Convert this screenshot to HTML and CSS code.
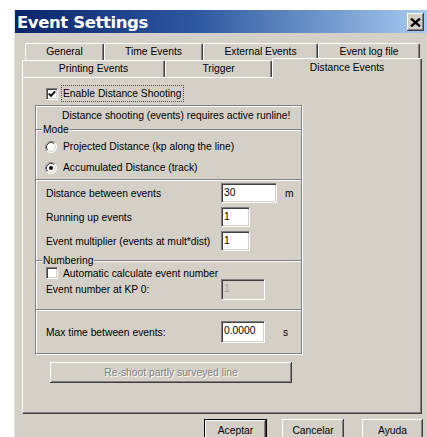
FILE: index.html
```html
<!DOCTYPE html>
<html>
<head>
<meta charset="utf-8">
<title>Event Settings</title>
<link rel="stylesheet" href="styles.css">
</head>
<body>
<div class="window">
  <div class="titlebar">
    <span class="title">Event Settings</span>
    <span class="close-btn">
      <svg width="11" height="9" viewBox="0 0 11 9"><path d="M1 0.6 L10 8.4 M10 0.6 L1 8.4" stroke="#000" stroke-width="2.3" fill="none"/></svg>
    </span>
  </div>

  <div class="client">
    <div class="tabs">
      <div class="tab-row row-back">
        <div class="tab w-general">General</div>
        <div class="tab w-time">Time Events</div>
        <div class="tab w-external">External Events</div>
        <div class="tab w-log">Event log file</div>
      </div>
      <div class="tab-row row-front">
        <div class="tab w-printing">Printing Events</div>
        <div class="tab w-trigger">Trigger</div>
        <div class="tab w-distance active">Distance Events</div>
      </div>
    </div>

    <div class="panel">
      <div class="top-check">
        <span class="checkbox">
          <svg width="8" height="8" viewBox="0 0 8 8"><path d="M0.8 3.6 L3 5.8 L7.2 1.4" stroke="#000" stroke-width="1.9" fill="none"/></svg>
        </span>
        <span class="focus-label">Enable Distance Shooting</span>
      </div>

      <div class="groupbox">
        <div class="sect sect-note">Distance shooting (events) requires active runline!</div>

        <div class="sect sect-mode">
          <div class="legend">Mode</div>
          <div class="radio-row">
            <svg class="radio" width="12" height="12" viewBox="0 0 12 12">
              <circle cx="6" cy="6" r="5.5" fill="#fff"/>
              <path d="M9.89 2.11 A5.5 5.5 0 0 0 2.11 9.89" stroke="#808080" fill="none"/>
              <path d="M9.18 2.82 A4.5 4.5 0 0 0 2.82 9.18" stroke="#404040" fill="none"/>
              <path d="M2.11 9.89 A5.5 5.5 0 0 0 9.89 2.11" stroke="#ffffff" fill="none"/>
              <path d="M2.82 9.18 A4.5 4.5 0 0 0 9.18 2.82" stroke="#d4d0c8" fill="none"/>
            </svg>
            <span>Projected Distance (kp along the line)</span>
          </div>
          <div class="radio-row">
            <svg class="radio" width="12" height="12" viewBox="0 0 12 12">
              <circle cx="6" cy="6" r="5.5" fill="#fff"/>
              <path d="M9.89 2.11 A5.5 5.5 0 0 0 2.11 9.89" stroke="#808080" fill="none"/>
              <path d="M9.18 2.82 A4.5 4.5 0 0 0 2.82 9.18" stroke="#404040" fill="none"/>
              <path d="M2.11 9.89 A5.5 5.5 0 0 0 9.89 2.11" stroke="#ffffff" fill="none"/>
              <path d="M2.82 9.18 A4.5 4.5 0 0 0 9.18 2.82" stroke="#d4d0c8" fill="none"/>
              <circle cx="6" cy="6" r="2" fill="#000"/>
            </svg>
            <span>Accumulated Distance (track)</span>
          </div>
        </div>

        <div class="sect sect-dist">
          <div class="field-row">
            <span class="label">Distance between events</span>
            <span class="field f-dist">30</span>
            <span class="unit unit-m">m</span>
          </div>
          <div class="field-row">
            <span class="label">Running up events</span>
            <span class="field f-small">1</span>
          </div>
          <div class="field-row">
            <span class="label">Event multiplier (events at mult*dist)</span>
            <span class="field f-small">1</span>
          </div>
        </div>

        <div class="sect sect-num">
          <div class="legend">Numbering</div>
          <div class="num-check">
            <span class="checkbox"></span>
            <span>Automatic calculate event number</span>
          </div>
          <div class="field-row kp-row">
            <span class="label">Event number at KP 0:</span>
            <span class="field f-mid disabled">1</span>
          </div>
        </div>

        <div class="sect sect-time">
          <div class="field-row time-row">
            <span class="label">Max time between events:</span>
            <span class="field f-mid">0.0000</span>
            <span class="unit unit-s">s</span>
          </div>
        </div>
      </div>

      <button class="btn btn-wide" disabled>Re-shoot partly surveyed line</button>
    </div>

    <div class="dialog-buttons">
      <button class="btn btn-default">Aceptar</button>
      <button class="btn btn-cancel">Cancelar</button>
      <button class="btn btn-help">Ayuda</button>
    </div>
  </div>
</div>
</body>
</html>
```

FILE: styles.css
```css
* { box-sizing: border-box; }

html, body {
  margin: 0;
  padding: 0;
  background: #fff;
  overflow: hidden;
}

body {
  width: 427px;
  height: 437px;
  padding: 10px 0 0 14px;
  font-family: "Liberation Sans", Arial, sans-serif;
  font-size: 10.3px;
  color: #000;
}

/* dialog frame */
.window {
  width: 413px;
  height: 427px;
  background: #d4d0c8;
  border-left: 1px solid #e4e2dc;
  overflow: hidden;
}

.titlebar {
  height: 23px;
  display: flex;
  justify-content: space-between;
  align-items: flex-start;
  background: linear-gradient(to right, #0a246a 0%, #2f5aa0 45%, #a6caf0 100%);
}

.title {
  color: #fff;
  font-family: "DejaVu Sans", sans-serif;
  font-weight: bold;
  font-size: 16.5px;
  letter-spacing: -0.4px;
  line-height: 20px;
  padding: 3px 0 0 2px;
  white-space: nowrap;
}

.close-btn {
  width: 17px;
  height: 18px;
  margin: 3px 3px 0 0;
  background: #d4d0c8;
  display: flex;
  align-items: center;
  justify-content: center;
  box-shadow: inset -1px -1px #404040, inset 1px 1px #fff, inset -2px -2px #808080;
}

/* client area */
.client {
  padding: 10px 5px 0 7px;
}

.tab-row {
  display: flex;
  height: 17px;
}

.row-back { margin-left: 3px; }

.tab {
  height: 17px;
  border-top: 1px solid #fff;
  border-left: 1px solid #fff;
  border-right: 1px solid #404040;
  box-shadow: inset -1px 0 #808080;
  border-radius: 2px 2px 0 0;
  text-align: center;
  line-height: 16px;
  white-space: nowrap;
  background: #d4d0c8;
}

.w-general  { width: 79px; }
.w-time     { width: 99px; }
.w-external { width: 115px; }
.w-log      { width: 102px; }
.w-printing { width: 143px; }
.w-trigger  { width: 107px; }
.w-distance { width: 150px; }

.tab.active {
  height: 20px;
  margin-top: -2px;
  line-height: 18px;
  position: relative;
  z-index: 1;
}

.panel {
  height: 337px;
  border-top: 1px solid #fff;
  border-left: 1px solid #fff;
  border-right: 1px solid #404040;
  border-bottom: 1px solid #404040;
  box-shadow: inset -1px -1px #808080;
  padding-top: 7px;
}

/* check boxes */
.checkbox {
  width: 12px;
  height: 12px;
  flex: none;
  display: flex;
  align-items: center;
  justify-content: center;
  background: #fff;
  border: 1px solid;
  border-color: #808080 #fff #fff #808080;
  box-shadow: inset 1px 1px #404040, inset -1px -1px #d4d0c8;
}

.top-check {
  display: flex;
  align-items: center;
  height: 17px;
  padding-left: 23px;
}

.focus-label {
  margin-left: 3px;
  border: 1px dotted #505050;
  padding: 0 1px;
  line-height: 15px;
}

/* group box with etched separators */
.groupbox {
  width: 267px;
  margin: 3px 0 0 12px;
  border: 1px solid #808080;
  box-shadow: inset 1px 1px #fff, 1px 1px #fff;
}

.sect + .sect {
  border-top: 1px solid #808080;
  box-shadow: inset 0 1px #fff;
}

.legend {
  width: max-content;
  margin: -7px 0 0 6px;
  padding: 0 1px;
  line-height: 13px;
  background: #d4d0c8;
}

.sect-note {
  padding: 3px 0 6px 26px;
  line-height: 14px;
  white-space: nowrap;
}

.sect-mode { padding-bottom: 1px; }

.radio-row {
  display: flex;
  align-items: center;
  height: 21px;
  padding-left: 9px;
}

.radio {
  flex: none;
  margin-right: 6px;
}

.sect-dist { padding: 1px 0 7px; }

.field-row {
  display: flex;
  align-items: center;
  height: 24px;
  padding-left: 10px;
  white-space: nowrap;
}

.label { width: 175px; flex: none; }

.field {
  height: 20px;
  padding: 2px 2px 0;
  line-height: 13px;
  background: #fff;
  border: 1px solid;
  border-color: #808080 #fff #fff #808080;
  box-shadow: inset 1px 1px #404040, inset -1px -1px #d4d0c8;
}

.f-dist  { width: 56px; }
.f-small { width: 29px; }
.f-mid   { width: 44px; }

.field.disabled {
  background: #d4d0c8;
  color: #a0a0a0;
}

.unit-m { margin-left: 8px; }
.unit-s { margin-left: 18px; }

.sect-num { padding-bottom: 9px; }

.num-check {
  display: flex;
  align-items: center;
  gap: 5px;
  height: 12px;
  padding-left: 10px;
}

.kp-row { height: 21px; }
.kp-row .field { height: 21px; }

.sect-time { padding: 11px 0 10px; }
.time-row { height: 22px; }
.time-row .field { height: 22px; }

/* push buttons */
.btn {
  font: inherit;
  color: #000;
  background: #d4d0c8;
  border: none;
  padding: 0;
  margin: 0;
  text-align: center;
  box-shadow: inset -1px -1px #404040, inset 1px 1px #fff, inset -2px -2px #808080;
}

.btn:disabled {
  color: #808080;
  text-shadow: 1px 1px #fff;
}

.btn-wide {
  display: block;
  width: 242px;
  height: 21px;
  margin: 8px 0 0 27px;
}

.dialog-buttons {
  display: flex;
  justify-content: flex-end;
  margin: 5px -1px 0 0;
}

.dialog-buttons .btn { height: 23px; }

.btn-default {
  width: 63px;
  border: 1px solid #000;
  box-shadow: inset -1px -1px #404040, inset 1px 1px #fff, inset -2px -2px #808080;
}

.btn-cancel { width: 62px; margin-left: 15px; }
.btn-help   { width: 61px; margin-left: 18px; }
```
